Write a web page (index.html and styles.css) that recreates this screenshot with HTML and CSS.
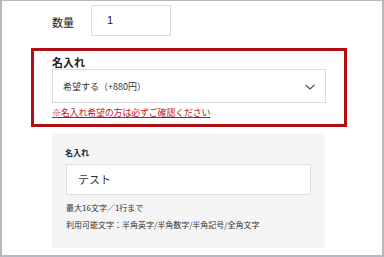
FILE: index.html
```html
<!DOCTYPE html>
<html lang="ja">
<head>
<meta charset="utf-8">
<link rel="stylesheet" href="styles.css">
</head>
<body>
<div class="frame">
  <div class="qty-row">
    <span class="qty-label">数量</span>
    <div class="qty-input">1</div>
  </div>
  <div class="name-box">
    <div class="name-title">名入れ</div>
    <div class="select">
      <span>希望する（+880円）</span>
      <svg class="chev" width="10" height="6" viewBox="0 0 10 6"><path d="M0.5 0.8 L5 5 L9.5 0.8" fill="none" stroke="#444" stroke-width="1.1"/></svg>
    </div>
    <a class="warn">※名入れ希望の方は必ずご確認ください</a>
  </div>
  <div class="panel">
    <div class="panel-title">名入れ</div>
    <div class="text-input">テスト</div>
    <div class="note note-first">最大16文字／1行まで</div>
    <div class="note">利用可能文字：半角英字/半角数字/半角記号/全角文字</div>
  </div>
</div>
</body>
</html>
```

FILE: styles.css
```css
html, body {
  margin: 0;
  padding: 0;
  background: #fff;
}
body {
  font-family: "Noto Sans CJK JP", "Noto Sans", sans-serif;
  color: #222;
}
.frame {
  box-sizing: border-box;
  width: 384px;
  height: 257px;
  border-style: solid;
  border-color: #b3b9bf;
  border-width: 1px 2px 2px 2px;
  padding-top: 4px;
  overflow: hidden;
}
.qty-row {
  display: flex;
  align-items: center;
  padding-left: 50px;
  height: 31px;
}
.qty-label {
  font-size: 11px;
  line-height: 14px;
  width: 39px;
  margin-top: 2px;
}
.qty-input {
  box-sizing: border-box;
  width: 80px;
  height: 31px;
  border: 1px solid #d9dde0;
  padding-left: 15px;
  font-family: "Liberation Sans", Arial, sans-serif;
  font-size: 11px;
  line-height: 29px;
}
.name-box {
  box-sizing: border-box;
  margin: 12px 0 0 29px;
  width: 316px;
  height: 79px;
  border: 3px solid #b10f14;
  padding: 4px 18px 0 18px;
}
.name-title {
  font-size: 11px;
  font-weight: bold;
  line-height: 14px;
}
.select {
  box-sizing: border-box;
  height: 34px;
  border: 1px solid #d9dde0;
  display: flex;
  align-items: center;
  justify-content: space-between;
  padding: 0 10px 0 10px;
  font-size: 9px;
  color: #333;
}
.chev {
  display: block;
  margin-top: 1px;
}
.warn {
  display: block;
  margin-top: 4px;
  font-size: 9px;
  line-height: 12px;
  color: #c0141b;
  text-decoration: underline;
  letter-spacing: -0.2px;
}
.panel {
  box-sizing: border-box;
  margin: 6px 0 0 50px;
  width: 273px;
  height: 115px;
  background: #f5f5f5;
  padding: 14px 14px 0 14px;
}
.panel-title {
  font-size: 8px;
  font-weight: bold;
  line-height: 12px;
  margin-left: -1px;
}
.text-input {
  box-sizing: border-box;
  margin-top: 5px;
  height: 31px;
  background: #fff;
  border: 1px solid #dde0e3;
  padding-left: 11px;
  font-size: 11px;
  line-height: 29px;
  color: #333;
}
.note {
  font-size: 8px;
  line-height: 17px;
  color: #333;
}
.note-first {
  margin-top: 4px;
}
```
